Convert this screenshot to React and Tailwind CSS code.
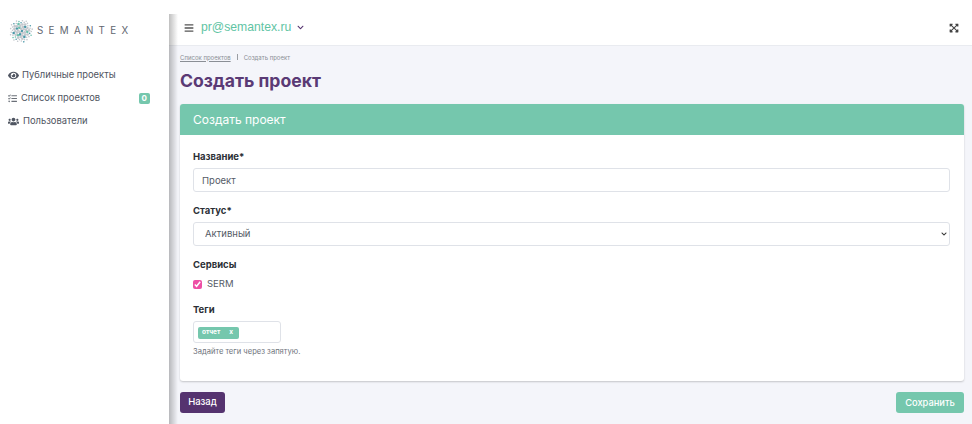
import { FaEye, FaTasks, FaUsers, FaBars, FaChevronDown, FaExpandArrowsAlt } from 'react-icons/fa'

const font = { fontFamily: 'Inter, "Noto Sans", sans-serif' }

// small generated dot cloud for the logo sphere
const dots = []
for (let i = 0; i < 70; i++) {
  const r = 11.5 * Math.sqrt((i + 0.5) / 70)
  const a = i * 2.39996
  const x = 12 + r * Math.cos(a)
  const y = 12 + r * Math.sin(a)
  const color = i % 6 === 0 ? '#4a98a8' : i % 7 === 0 ? '#6cc0ae' : '#c3c7cc'
  dots.push(<circle key={i} cx={x} cy={y} r={i < 35 ? 1.3 : 0.8} fill={color} />)
}

function NavItem({ icon, label, gap, badge }) {
  return (
    <div className="flex h-[23px] items-center text-[9.4px] text-[#4f5561]">
      {icon}
      <span className={gap}>{label}</span>
      {badge && (
        <span className="ml-auto mr-[19px] rounded-[2px] bg-[#75c7ad] px-[3px] text-[8px] leading-[11px] font-bold text-white">{badge}</span>
      )}
    </div>
  )
}

export default function App() {
  return (
    <div style={font} className="flex h-[424px] w-[972px] overflow-hidden bg-white">
      <aside className="w-[169px] shrink-0 bg-white">
        <div className="flex h-[64px] items-center pl-[9px] pb-[2px]">
          <svg width="24" height="24" viewBox="0 0 24 24">{dots}</svg>
          <span className="ml-[4px] text-[9.8px] tracking-[0.54em] text-[#5f6670]">SEMANTEX</span>
        </div>
        <nav className="pl-[8px]">
          <NavItem icon={<FaEye size={11} className="text-[#4f5561]" />} label="Публичные проекты" gap="ml-[3px]" />
          <NavItem icon={<FaTasks size={9} className="text-[#6b7078]" />} label="Список проектов" gap="ml-[4px]" badge="0" />
          <NavItem icon={<FaUsers size={11} className="text-[#4f5561]" />} label="Пользователи" gap="ml-[4px]" />
        </nav>
      </aside>

      <main className="relative flex min-w-0 flex-1 flex-col pt-[14px]">
        <div className="pointer-events-none absolute top-[14px] bottom-0 left-0 w-[9px] bg-gradient-to-r from-black/25 to-transparent" />
        <header className="flex h-[32px] shrink-0 items-center border-b border-[#e9ebf0] pb-[4px] pl-[15px] pr-[13px]">
          <FaBars size={10} className="text-[#555]" />
          <span className="ml-[7px] text-[12.2px] text-[#5fc4a4]" style={{ fontFamily: '"Liberation Sans", sans-serif' }}>pr@semantex.ru</span>
          <FaChevronDown size={7} className="ml-[6px] text-[#55336f]" />
          <FaExpandArrowsAlt size={10} className="ml-auto text-[#444]" />
        </header>

        <div className="flex flex-1 flex-col bg-[#f4f5fa] pl-[11px] pr-[8px]">
          <div className="mt-[7px] flex h-[8px] items-center text-[6px] text-[#8b8f96]">
            <span className="underline">Список проектов</span>
            <span className="mx-[6px] h-[6px] w-px bg-[#9a9da3]" />
            <span>Создать проект</span>
          </div>
          <h1 className="mt-[8px] text-[17.6px] leading-[24px] font-bold text-[#5a3a75]">Создать проект</h1>

          <section className="mt-[11px] h-[277px] rounded-[3px] bg-white shadow-[0_1px_2px_rgba(0,0,0,0.2)]">
            <div className="flex h-[31px] items-center rounded-t-[3px] bg-[#75c7ad] px-[13px] text-[12px] text-white">Создать проект</div>
            <div className="px-[13px] pt-[16px]">
              <label className="block text-[9.5px] leading-[12px] font-bold text-[#2b2f36]">Название*</label>
              <input
                readOnly
                value="Проект"
                className="mt-[5px] block h-[24px] w-[757px] rounded-[3px] border border-[#dfe2e8] bg-white px-[8px] text-[9.5px] text-[#555b66] outline-none"
              />
              <label className="mt-[13px] block text-[9.5px] leading-[12px] font-bold text-[#2b2f36]">Статус*</label>
              <div className="relative mt-[5px] w-[757px]">
                <select className="block h-[24px] w-full appearance-none rounded-[3px] border border-[#dfe2e8] bg-white px-[11px] text-[9.5px] text-[#555b66] outline-none">
                  <option>Активный</option>
                </select>
                <FaChevronDown size={6} className="absolute top-[9px] right-[3px] text-[#333]" />
              </div>
              <div className="mt-[13px] text-[9.5px] leading-[12px] font-bold text-[#2b2f36]">Сервисы</div>
              <label className="mt-[7px] flex h-[12px] items-center text-[9.5px] text-[#555b66]">
                <input type="checkbox" readOnly checked className="m-0 h-[9px] w-[9px] accent-[#ee4fa5]" />
                <span className="ml-[5px]">SERM</span>
              </label>
              <div className="mt-[14px] text-[9.5px] leading-[12px] font-bold text-[#2b2f36]">Теги</div>
              <div className="mt-[5px] flex h-[22px] w-[88px] items-center rounded-[3px] border border-[#dfe2e8] pl-[4px] pt-[1px]">
                <span className="flex h-[12px] w-[41px] items-center justify-between rounded-[2px] bg-[#75c7ad] px-[4px] text-[6.5px] font-bold text-white">
                  <span>отчет</span>
                  <span className="mr-[2px]">x</span>
                </span>
              </div>
              <p className="mt-[4px] text-[7.6px] leading-[10px] text-[#6f747c]">Задайте теги через запятую.</p>
            </div>
          </section>

          <div className="mt-[11px] flex justify-between">
            <button className="h-[21px] w-[45px] rounded-[3px] bg-[#55336f] text-[9.5px] font-medium text-white">Назад</button>
            <button className="h-[21px] w-[68px] rounded-[3px] bg-[#75c7ad] text-[9.3px] font-medium text-white">Сохранить</button>
          </div>
        </div>
      </main>
    </div>
  )
}
